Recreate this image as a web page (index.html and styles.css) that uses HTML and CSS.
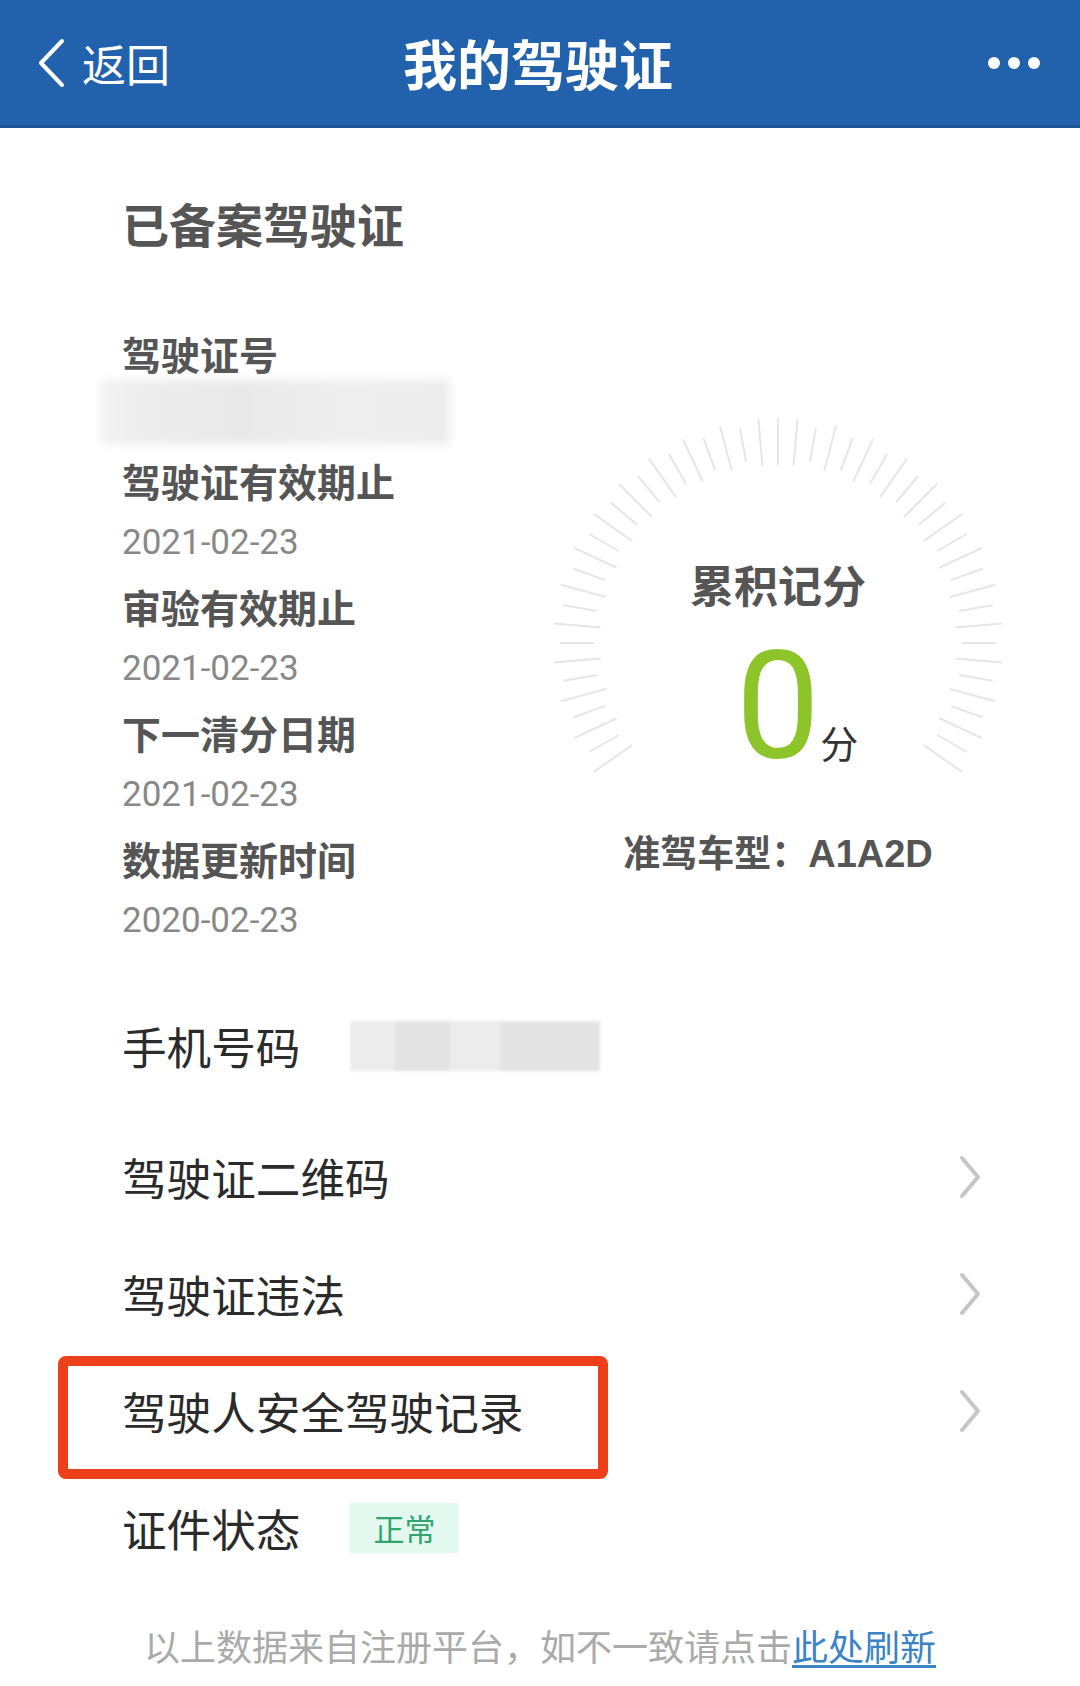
FILE: index.html
```html
<!DOCTYPE html>
<html lang="zh-CN">
<head>
<meta charset="utf-8">
<title>我的驾驶证</title>
<link rel="stylesheet" href="styles.css">
</head>
<body>
<header class="topbar">
  <div class="back">
    <svg class="back-icon" viewBox="0 0 30 50" width="30" height="50"><path d="M26 3 L5 25 L26 47" fill="none" stroke="#fff" stroke-width="4" stroke-linecap="round" stroke-linejoin="round"/></svg>
    <span class="back-text">返回</span>
  </div>
  <h1 class="title">我的驾驶证</h1>
  <div class="more"><i></i><i></i><i></i></div>
</header>

<main class="page">
  <h2 class="section-title">已备案驾驶证</h2>

  <section class="license">
    <div class="fields">
      <div class="field field-id">
        <div class="label">驾驶证号</div>
        <div class="value"><span class="masked"></span></div>
      </div>
      <div class="field">
        <div class="label">驾驶证有效期止</div>
        <div class="value">2021-02-23</div>
      </div>
      <div class="field">
        <div class="label">审验有效期止</div>
        <div class="value">2021-02-23</div>
      </div>
      <div class="field">
        <div class="label">下一清分日期</div>
        <div class="value">2021-02-23</div>
      </div>
      <div class="field">
        <div class="label">数据更新时间</div>
        <div class="value">2020-02-23</div>
      </div>
    </div>

    <div class="score">
      <div class="gauge">
        <svg class="ticks" viewBox="0 0 460 460" width="460" height="460">
          <g stroke="#e6e6e6" stroke-width="2">
            <line x1="230" y1="5" x2="230" y2="52" transform="rotate(-125 230 230)"/>
            <line x1="230" y1="12" x2="230" y2="46" transform="rotate(-120 230 230)"/>
            <line x1="230" y1="5" x2="230" y2="52" transform="rotate(-115 230 230)"/>
            <line x1="230" y1="12" x2="230" y2="46" transform="rotate(-110 230 230)"/>
            <line x1="230" y1="5" x2="230" y2="52" transform="rotate(-105 230 230)"/>
            <line x1="230" y1="12" x2="230" y2="46" transform="rotate(-100 230 230)"/>
            <line x1="230" y1="5" x2="230" y2="52" transform="rotate(-95 230 230)"/>
            <line x1="230" y1="12" x2="230" y2="46" transform="rotate(-90 230 230)"/>
            <line x1="230" y1="5" x2="230" y2="52" transform="rotate(-85 230 230)"/>
            <line x1="230" y1="12" x2="230" y2="46" transform="rotate(-80 230 230)"/>
            <line x1="230" y1="5" x2="230" y2="52" transform="rotate(-75 230 230)"/>
            <line x1="230" y1="12" x2="230" y2="46" transform="rotate(-70 230 230)"/>
            <line x1="230" y1="5" x2="230" y2="52" transform="rotate(-65 230 230)"/>
            <line x1="230" y1="12" x2="230" y2="46" transform="rotate(-60 230 230)"/>
            <line x1="230" y1="5" x2="230" y2="52" transform="rotate(-55 230 230)"/>
            <line x1="230" y1="12" x2="230" y2="46" transform="rotate(-50 230 230)"/>
            <line x1="230" y1="5" x2="230" y2="52" transform="rotate(-45 230 230)"/>
            <line x1="230" y1="12" x2="230" y2="46" transform="rotate(-40 230 230)"/>
            <line x1="230" y1="5" x2="230" y2="52" transform="rotate(-35 230 230)"/>
            <line x1="230" y1="12" x2="230" y2="46" transform="rotate(-30 230 230)"/>
            <line x1="230" y1="5" x2="230" y2="52" transform="rotate(-25 230 230)"/>
            <line x1="230" y1="12" x2="230" y2="46" transform="rotate(-20 230 230)"/>
            <line x1="230" y1="5" x2="230" y2="52" transform="rotate(-15 230 230)"/>
            <line x1="230" y1="12" x2="230" y2="46" transform="rotate(-10 230 230)"/>
            <line x1="230" y1="5" x2="230" y2="52" transform="rotate(-5 230 230)"/>
            <line x1="230" y1="5" x2="230" y2="52" transform="rotate(0 230 230)"/>
            <line x1="230" y1="5" x2="230" y2="52" transform="rotate(5 230 230)"/>
            <line x1="230" y1="12" x2="230" y2="46" transform="rotate(10 230 230)"/>
            <line x1="230" y1="5" x2="230" y2="52" transform="rotate(15 230 230)"/>
            <line x1="230" y1="12" x2="230" y2="46" transform="rotate(20 230 230)"/>
            <line x1="230" y1="5" x2="230" y2="52" transform="rotate(25 230 230)"/>
            <line x1="230" y1="12" x2="230" y2="46" transform="rotate(30 230 230)"/>
            <line x1="230" y1="5" x2="230" y2="52" transform="rotate(35 230 230)"/>
            <line x1="230" y1="12" x2="230" y2="46" transform="rotate(40 230 230)"/>
            <line x1="230" y1="5" x2="230" y2="52" transform="rotate(45 230 230)"/>
            <line x1="230" y1="12" x2="230" y2="46" transform="rotate(50 230 230)"/>
            <line x1="230" y1="5" x2="230" y2="52" transform="rotate(55 230 230)"/>
            <line x1="230" y1="12" x2="230" y2="46" transform="rotate(60 230 230)"/>
            <line x1="230" y1="5" x2="230" y2="52" transform="rotate(65 230 230)"/>
            <line x1="230" y1="12" x2="230" y2="46" transform="rotate(70 230 230)"/>
            <line x1="230" y1="5" x2="230" y2="52" transform="rotate(75 230 230)"/>
            <line x1="230" y1="12" x2="230" y2="46" transform="rotate(80 230 230)"/>
            <line x1="230" y1="5" x2="230" y2="52" transform="rotate(85 230 230)"/>
            <line x1="230" y1="12" x2="230" y2="46" transform="rotate(90 230 230)"/>
            <line x1="230" y1="5" x2="230" y2="52" transform="rotate(95 230 230)"/>
            <line x1="230" y1="12" x2="230" y2="46" transform="rotate(100 230 230)"/>
            <line x1="230" y1="5" x2="230" y2="52" transform="rotate(105 230 230)"/>
            <line x1="230" y1="12" x2="230" y2="46" transform="rotate(110 230 230)"/>
            <line x1="230" y1="5" x2="230" y2="52" transform="rotate(115 230 230)"/>
            <line x1="230" y1="12" x2="230" y2="46" transform="rotate(120 230 230)"/>
            <line x1="230" y1="5" x2="230" y2="52" transform="rotate(125 230 230)"/>
          </g>
        </svg>
        <div class="gauge-title">累积记分</div>
        <div class="gauge-value"><span class="num">0</span><span class="unit">分</span></div>
      </div>
      <div class="vehicle">准驾车型：<span class="vehicle-code">A1A2D</span></div>
    </div>
  </section>

  <ul class="menu">
    <li class="row row-phone"><span class="row-label">手机号码</span><span class="phone-mask"></span></li>
    <li class="row row-link"><span class="row-label">驾驶证二维码</span><svg class="chev" viewBox="0 0 24 44" width="24" height="44"><path d="M4 3 L20 22 L4 41" fill="none" stroke="#c6c6c6" stroke-width="4" stroke-linecap="round" stroke-linejoin="round"/></svg></li>
    <li class="row row-link"><span class="row-label">驾驶证违法</span><svg class="chev" viewBox="0 0 24 44" width="24" height="44"><path d="M4 3 L20 22 L4 41" fill="none" stroke="#c6c6c6" stroke-width="4" stroke-linecap="round" stroke-linejoin="round"/></svg></li>
    <li class="row row-link row-marked"><span class="row-label">驾驶人安全驾驶记录</span><svg class="chev" viewBox="0 0 24 44" width="24" height="44"><path d="M4 3 L20 22 L4 41" fill="none" stroke="#c6c6c6" stroke-width="4" stroke-linecap="round" stroke-linejoin="round"/></svg><span class="highlight"></span></li>
    <li class="row"><span class="row-label">证件状态</span><span class="badge">正常</span></li>
  </ul>

  <p class="note">以上数据来自注册平台，如不一致请点击<a class="refresh" href="#">此处刷新</a></p>
</main>
</body>
</html>
```

FILE: styles.css
```css
* { box-sizing: border-box; }

html, body {
  margin: 0;
  padding: 0;
  background: #ffffff;
}

body {
  width: 1080px;
  font-family: "Noto Sans CJK SC", "Noto Sans", sans-serif;
  color: #333;
}

/* ---------- top bar ---------- */
.topbar {
  height: 128px;
  background: #2262ac;
  border-bottom: 3px solid #1c5394;
  display: grid;
  grid-template-columns: 1fr auto 1fr;
  align-items: center;
  padding: 0 40px 0 36px;
  color: #fff;
}

.back {
  display: flex;
  align-items: center;
  gap: 16px;
}

.back-icon { display: block; }

.back-text {
  font-size: 44px;
  line-height: 1;
  font-weight: 400;
}

.title {
  margin: 0;
  font-size: 54px;
  line-height: 1;
  font-weight: 700;
  letter-spacing: 0;
}

.more {
  justify-self: end;
  display: flex;
  gap: 8px;
}

.more i {
  display: block;
  width: 12px;
  height: 12px;
  border-radius: 50%;
  background: #fff;
}

/* ---------- page ---------- */
.page {
  padding: 0 54px 0 122px;
}

.section-title {
  margin: 65px 0 0;
  font-size: 47px;
  line-height: 60px;
  font-weight: 700;
  color: #555;
}

.license {
  display: flex;
  margin-top: 71px;
}

.fields {
  flex: none;
  width: 408px;
}

.field { margin-bottom: 4px; }

.label {
  font-size: 39px;
  line-height: 58px;
  font-weight: 700;
  color: #555;
  white-space: nowrap;
}

.value {
  height: 64px;
  padding-top: 4px;
  font-family: Roboto, "Noto Sans", sans-serif;
  font-size: 35px;
  line-height: 60px;
  color: #888;
}

.field-id .value {
  height: 67px;
  padding-top: 0;
}

.masked {
  display: block;
  width: 350px;
  height: 64px;
  margin: -2px 0 0 -22px;
  background: linear-gradient(90deg, #f3f3f3 0%, #ececec 14%, #e9e9e9 40%, #eeeeee 70%, #ececec 100%);
  filter: blur(5px);
}

/* ---------- score gauge ---------- */
.score {
  flex: 1;
  padding-top: 89px;
  display: flex;
  flex-direction: column;
  align-items: center;
}

.gauge {
  position: relative;
  width: 460px;
  padding-top: 143px;
  display: flex;
  flex-direction: column;
  align-items: center;
}

.ticks {
  position: absolute;
  left: 0;
  top: 0;
}

.gauge-title {
  position: relative;
  font-size: 44px;
  line-height: 56px;
  font-weight: 700;
  color: #555;
}

.gauge-value {
  position: relative;
  margin-top: 20px;
  display: flex;
  align-items: baseline;
  justify-content: center;
}

.num {
  font-family: Roboto, "Noto Sans", sans-serif;
  font-size: 150px;
  line-height: 150px;
  font-weight: 400;
  color: #8dc42a;
}

.unit {
  font-size: 38px;
  line-height: 1;
  color: #333;
  margin-left: 0;
  margin-right: -38px;
}

.vehicle {
  margin-top: 44px;
  font-size: 37px;
  line-height: 50px;
  font-weight: 700;
  color: #555;
  white-space: nowrap;
}

.vehicle-code {
  font-family: "Liberation Sans", Arial, sans-serif;
  font-weight: 700;
  font-size: 38px;
}

/* ---------- menu ---------- */
.menu {
  list-style: none;
  margin: 32px 0 0;
  padding: 0;
}

.row {
  position: relative;
  height: 117px;
  display: flex;
  align-items: center;
  padding-right: 44px;
  font-size: 44.6px;
  color: #2b2b2b;
}

.row-phone { margin-bottom: 14px; }

.row-link { justify-content: space-between; }

.row-label { line-height: 60px; white-space: nowrap; }

.phone-mask {
  width: 250px;
  height: 50px;
  margin-left: 50px;
  background: linear-gradient(90deg, #ececec 0 18%, #e3e3e3 18% 40%, #ececec 40% 60%, #e4e4e4 60% 100%);
  filter: blur(1.5px);
}

.chev { display: block; }

.highlight {
  position: absolute;
  left: -64px;
  top: 4px;
  width: 550px;
  height: 123px;
  border: 10px solid #ee3f1b;
  border-radius: 8px;
  pointer-events: none;
}

.badge {
  margin-left: 49px;
  height: 50px;
  padding: 0 24px;
  display: flex;
  align-items: center;
  font-size: 31px;
  color: #31a56f;
  background: #e3f8ee;
}

/* ---------- note ---------- */
.note {
  margin: 34px -54px 0 -122px;
  text-align: center;
  font-size: 36px;
  line-height: 50px;
  color: #aaa;
}

.refresh {
  color: #3a84c6;
  text-decoration: underline;
  text-underline-offset: 4px;
}
```
